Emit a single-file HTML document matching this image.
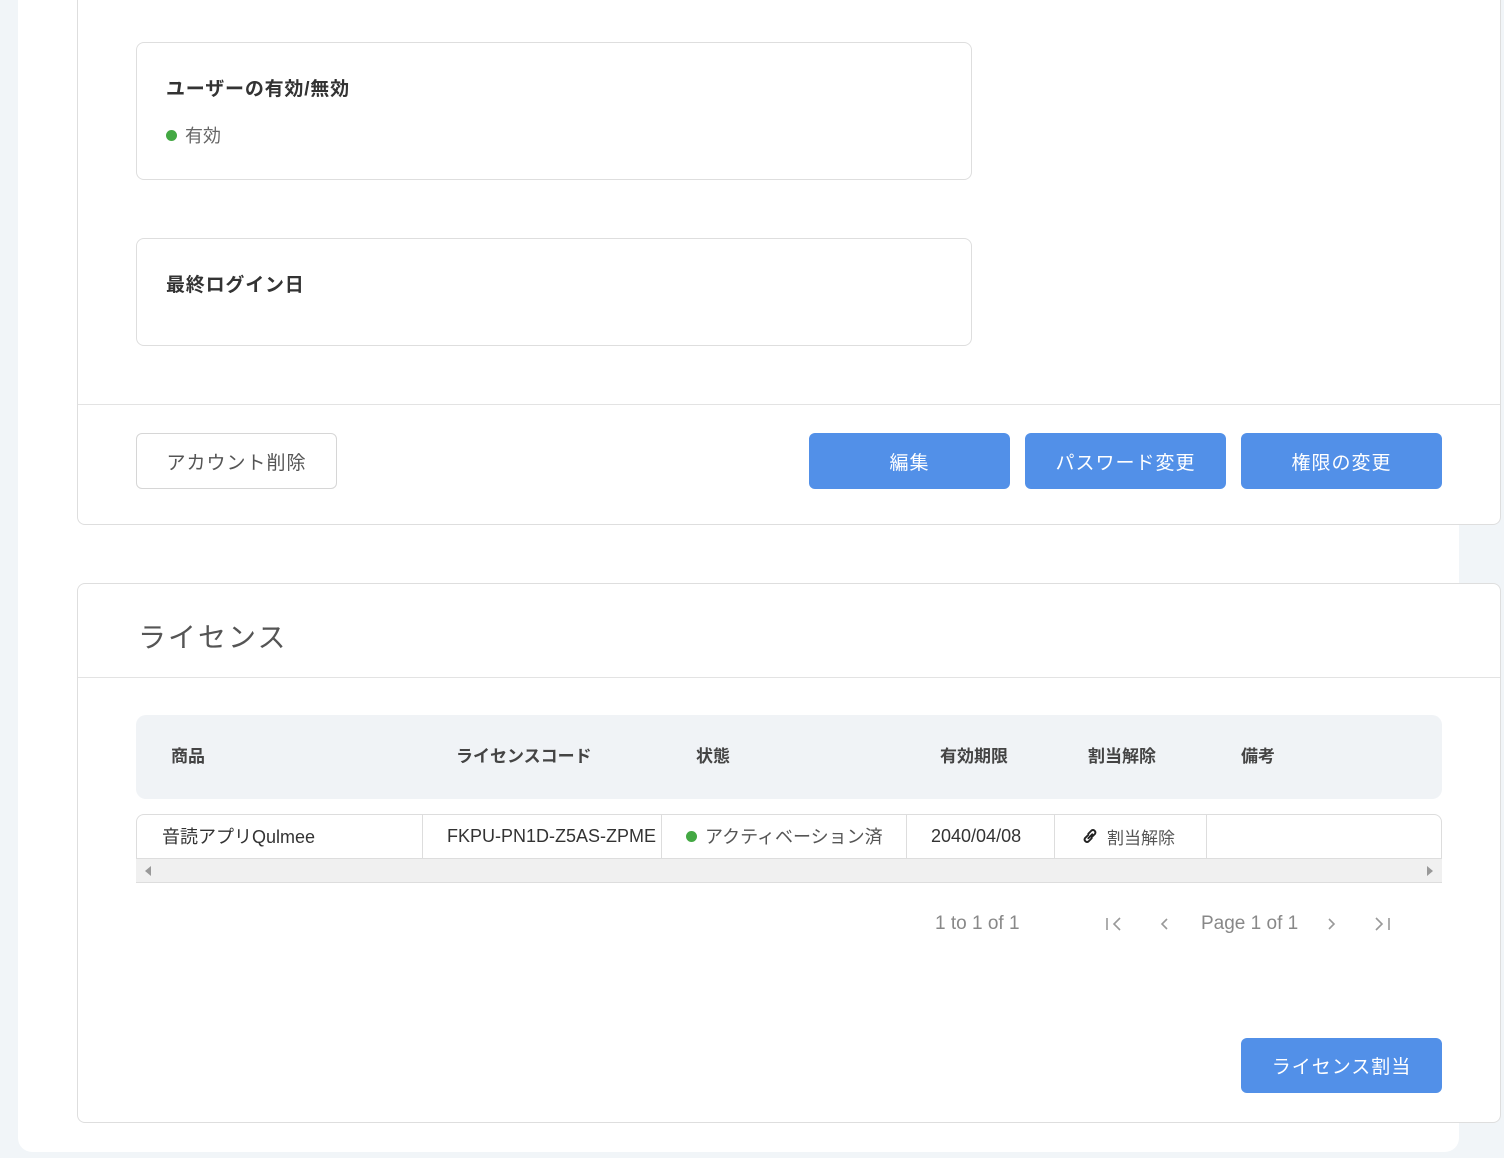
<!DOCTYPE html>
<html><head><meta charset="utf-8"><style>
*{box-sizing:border-box;margin:0;padding:0}
body{width:1504px;height:1158px;background:#f1f5f8;font-family:"Liberation Sans","Noto Sans CJK JP",sans-serif;position:relative;overflow:hidden;color:#333}
.abs{position:absolute}
.panel{left:18px;top:-20px;width:1441px;height:1172px;background:#fff;border-radius:14px}
.card{background:#fff;border:1px solid #dedede;border-radius:8px}
.t{font-size:19px;font-weight:bold;color:#333;letter-spacing:0.8px}
.btn{border-radius:6px;background:#5290e8;color:#fff;font-size:19px;display:flex;align-items:center;justify-content:center;letter-spacing:1px}
.th{font-size:17px;font-weight:bold;color:#444;top:742px}
.td{font-size:18px;color:#333;top:814px;height:44px;display:flex;align-items:center}
.dot{display:inline-block;width:11px;height:11px;border-radius:50%;background:#43a843;margin-right:8px}
.vl{position:absolute;top:0;width:1px;height:44px;background:#ddd}
.pg{color:#888;font-size:19px;top:912px}
.ic{position:absolute;top:916px}
</style></head><body>
<div class="abs panel"></div>
<div class="abs card" style="left:77px;top:-10px;width:1424px;height:535px"></div>
<div class="abs" style="left:78px;top:404px;width:1422px;height:1px;background:#e3e3e3"></div>
<div class="abs card" style="left:136px;top:42px;width:836px;height:138px"></div>
<div class="abs t" style="left:166px;top:74px">ユーザーの有効/無効</div>
<div class="abs" style="left:166px;top:122px;font-size:18px;color:#666;display:flex;align-items:center"><span class="dot"></span>有効</div>
<div class="abs card" style="left:136px;top:238px;width:836px;height:108px"></div>
<div class="abs t" style="left:166px;top:270px">最終ログイン日</div>
<div class="abs" style="left:136px;top:433px;width:201px;height:56px;border:1px solid #d6d6d6;border-radius:6px;display:flex;align-items:center;justify-content:center;font-size:19px;color:#555;letter-spacing:1px">アカウント削除</div>
<div class="abs btn" style="left:809px;top:433px;width:201px;height:56px">編集</div>
<div class="abs btn" style="left:1025px;top:433px;width:201px;height:56px">パスワード変更</div>
<div class="abs btn" style="left:1241px;top:433px;width:201px;height:56px">権限の変更</div>

<div class="abs card" style="left:77px;top:583px;width:1424px;height:540px"></div>
<div class="abs" style="left:138px;top:616px;font-size:28px;color:#555;letter-spacing:2px">ライセンス</div>
<div class="abs" style="left:78px;top:677px;width:1422px;height:1px;background:#e3e3e3"></div>
<div class="abs" style="left:136px;top:715px;width:1306px;height:84px;background:#f0f3f6;border-radius:10px"></div>
<div class="abs th" style="left:171px">商品</div>
<div class="abs th" style="left:456px">ライセンスコード</div>
<div class="abs th" style="left:696px">状態</div>
<div class="abs th" style="left:940px">有効期限</div>
<div class="abs th" style="left:1088px">割当解除</div>
<div class="abs th" style="left:1241px">備考</div>
<div class="abs" style="left:136px;top:814px;width:1306px;height:45px;border:1px solid #ddd;border-radius:8px 8px 0 0">
<div class="vl" style="left:285px"></div><div class="vl" style="left:524px"></div><div class="vl" style="left:769px"></div><div class="vl" style="left:917px"></div><div class="vl" style="left:1069px"></div>
</div>
<div class="abs td" style="left:162px">音読アプリQulmee</div>
<div class="abs td" style="left:447px">FKPU-PN1D-Z5AS-ZPME</div>
<div class="abs td" style="left:686px;color:#555"><span class="dot"></span>アクティベーション済</div>
<div class="abs td" style="left:931px">2040/04/08</div>
<div class="abs td" style="left:1081px;color:#555;font-size:17px"><svg width="18" height="18" viewBox="0 0 16 16" style="margin-right:8px" fill="none" stroke="#222" stroke-width="1.7" stroke-linecap="round"><path d="M6.5 7 L3.5 10a2.2 2.2 0 0 0 3 3L9.5 10M9.5 9 L12.5 6a2.2 2.2 0 0 0-3-3L6.5 6M6.5 10l3.5-3.5"/></svg>割当解除</div>
<div class="abs" style="left:136px;top:859px;width:1306px;height:24px;background:#f0f0f0;border-bottom:1px solid #ddd"></div>
<div class="abs" style="left:145px;top:866px;width:0;height:0;border-top:5px solid transparent;border-bottom:5px solid transparent;border-right:6px solid #999"></div>
<div class="abs" style="left:1427px;top:866px;width:0;height:0;border-top:5px solid transparent;border-bottom:5px solid transparent;border-left:6px solid #999"></div>
<div class="abs pg" style="left:935px;top:913px">1 to 1 of 1</div>
<svg class="ic" style="left:1105px" width="18" height="16" viewBox="0 0 18 16" fill="none" stroke="#999" stroke-width="1.6"><path d="M2 2v12M15 2L9 8l6 6"/></svg>
<svg class="ic" style="left:1158px" width="12" height="16" viewBox="0 0 12 16" fill="none" stroke="#999" stroke-width="1.6"><path d="M9 3L4 8l5 5"/></svg>
<div class="abs pg" style="left:1201px;top:913px">Page 1 of 1</div>
<svg class="ic" style="left:1326px" width="12" height="16" viewBox="0 0 12 16" fill="none" stroke="#999" stroke-width="1.6"><path d="M3 3l5 5-5 5"/></svg>
<svg class="ic" style="left:1373px" width="18" height="16" viewBox="0 0 18 16" fill="none" stroke="#999" stroke-width="1.6"><path d="M3 2l6 6-6 6M16 2v12"/></svg>
<div class="abs btn" style="left:1241px;top:1038px;width:201px;height:55px">ライセンス割当</div>
</body></html>
